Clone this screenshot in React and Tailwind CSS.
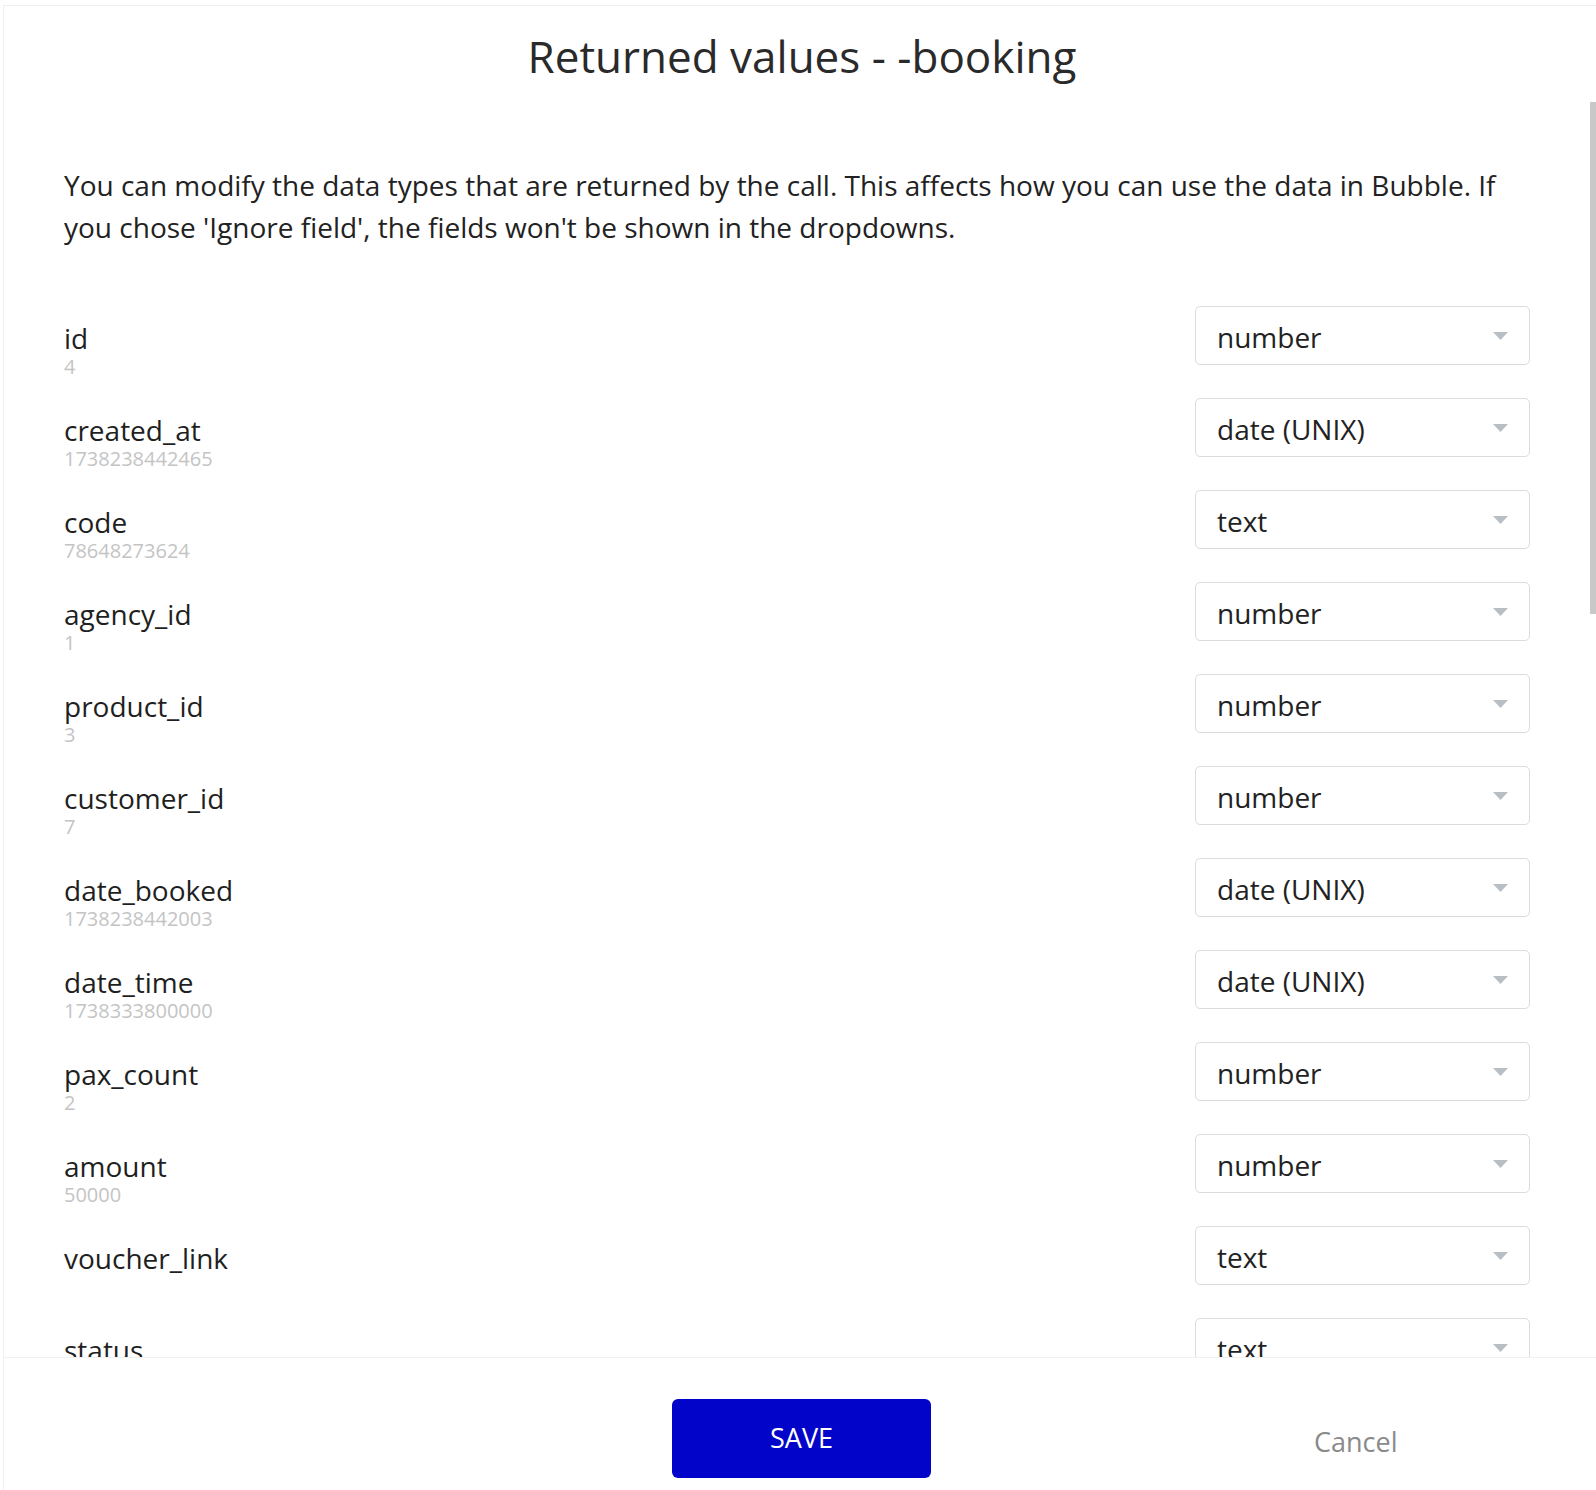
import React from "react";

const fields = [
  { name: "id", sample: "4", type: "number" },
  { name: "created_at", sample: "1738238442465", type: "date (UNIX)" },
  { name: "code", sample: "78648273624", type: "text" },
  { name: "agency_id", sample: "1", type: "number" },
  { name: "product_id", sample: "3", type: "number" },
  { name: "customer_id", sample: "7", type: "number" },
  { name: "date_booked", sample: "1738238442003", type: "date (UNIX)" },
  { name: "date_time", sample: "1738333800000", type: "date (UNIX)" },
  { name: "pax_count", sample: "2", type: "number" },
  { name: "amount", sample: "50000", type: "number" },
  { name: "voucher_link", sample: "", type: "text" },
  { name: "status", sample: "pending", type: "text" },
  { name: "notes", sample: "", type: "text" },
];

function TypeSelect({ value }) {
  return (
    <div className="flex h-[59px] w-[335px] shrink-0 items-center justify-between rounded-[5px] border border-[#dcdcdc] bg-white pl-[21px] pr-[21px]">
      <span className="pt-[3px] text-[28px] leading-none text-[#222]">{value}</span>
      {/* caret */}
      <svg width="15" height="8" viewBox="0 0 15 8">
        <path d="M0 0 H15 L7.5 8 Z" fill="#b8bfc4" />
      </svg>
    </div>
  );
}

function FieldRow({ field }) {
  return (
    <div className="flex h-[92px] shrink-0 items-start justify-between">
      <div className="pt-[14px]">
        <div className="text-[28px] leading-[36px] text-[#1f1f1f]">{field.name}</div>
        {field.sample && (
          <div className="text-[20px] leading-[22px] text-[#c4c4c4]">{field.sample}</div>
        )}
      </div>
      <TypeSelect value={field.type} />
    </div>
  );
}

export default function App() {
  return (
    <div
      className="relative h-[1490px] w-full overflow-hidden bg-white pl-[3px] pt-[5px]"
      style={{ fontFamily: "'Open Sans', 'Noto Sans', sans-serif" }}
    >
      <div className="flex h-full flex-col border-l border-t border-[#efefef]">
        {/* Scrollable body */}
        <div className="flex-1 overflow-hidden pl-[60px] pr-[66px]">
          <h1 className="pl-[10px] pt-[21px] text-center text-[44px] leading-[58px] text-[#2a2a2a]">
            Returned values - -booking
          </h1>
          <p className="mt-[79px] text-[28px] leading-[42px] text-[#222]">
            You can modify the data types that are returned by the call. This affects how you can use the data in Bubble. If
            you chose 'Ignore field', the fields won't be shown in the dropdowns.
          </p>
          <div className="mt-[58px] flex flex-col">
            {fields.map((f) => (
              <FieldRow key={f.name} field={f} />
            ))}
          </div>
        </div>

        {/* Footer */}
        <div className="flex h-[133px] shrink-0 items-start border-t border-[#f0f0f0] bg-white pt-[41px]">
          <button className="ml-[668px] h-[79px] w-[259px] rounded-[6px] bg-[#0205c9] text-[27px] text-white">
            SAVE
          </button>
          <button className="ml-[383px] mt-[25px] text-[27px] leading-[36px] text-[#8a8a8a]">
            Cancel
          </button>
        </div>
      </div>

      {/* scrollbar thumb */}
      <div className="absolute right-0 top-[102px] h-[512px] w-[6px] bg-[#c8c8c8]" />
    </div>
  );
}
